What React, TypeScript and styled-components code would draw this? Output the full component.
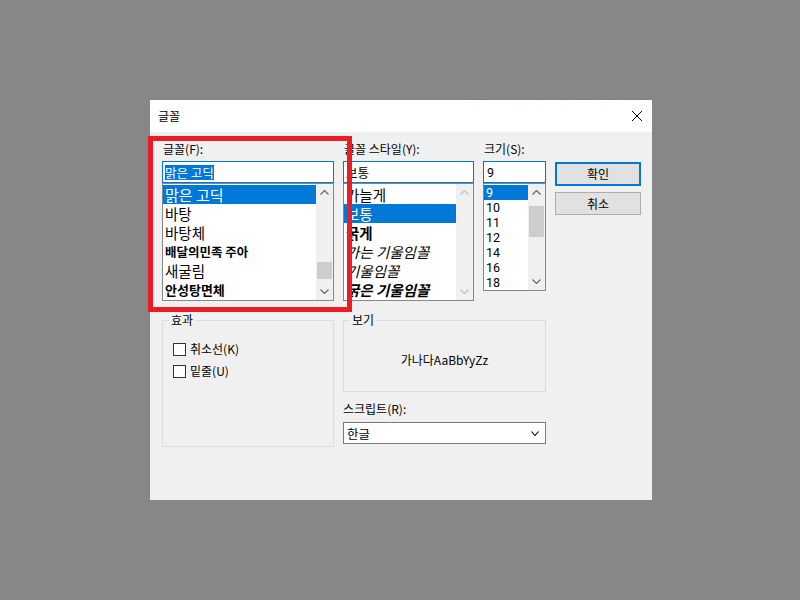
import React from 'react';
import styled, { createGlobalStyle, css } from 'styled-components';

const GlobalStyle = createGlobalStyle`
  html, body { margin: 0; padding: 0; background: #878787; }
  body {
    font-family: "Noto Sans CJK KR", "Noto Sans", sans-serif;
    font-size: 12px;
    color: #000;
  }
  * { box-sizing: border-box; }
`;

const Page = styled.div`
  width: 800px;
  height: 600px;
  padding: 100px 0 0 150px;
  background: #878787;
`;

const Dialog = styled.div`
  position: relative;
  width: 502px;
  height: 400px;
  background: #f0f0f0;
  display: flex;
  flex-direction: column;
`;

const BehindStrip = styled.div`
  position: absolute;
  top: -1px;
  left: 317px;
  height: 1px;
  display: flex;
  gap: 5px;
`;

const StripSeg = styled.div<{ $c: string; $w: number }>`
  width: ${(p) => p.$w}px;
  height: 100%;
  background: ${(p) => p.$c};
`;

const TitleBar = styled.div`
  height: 32px;
  background: #fff;
  display: flex;
  align-items: center;
  justify-content: space-between;
  padding: 0 10px 0 8px;
`;

const Title = styled.span`
  font-size: 12px;
  line-height: 16px;
`;

const CloseButton = styled.button`
  width: 10px;
  height: 10px;
  padding: 0;
  border: 0;
  background: none;
  display: flex;
`;

const Body = styled.div`
  padding: 9px 0 0 12px;
  display: flex;
  flex-direction: column;
`;

const TopRow = styled.div`
  display: grid;
  grid-template-columns: 172px 131px 63px 86px;
  column-gap: 9px;
  align-items: start;
`;

const Column = styled.div`
  display: flex;
  flex-direction: column;
`;

const Label = styled.div`
  font-size: 12px;
  line-height: 16px;
  height: 16px;
  white-space: nowrap;
`;

const FieldLabel = styled(Label)`
  margin-bottom: 4px;
  padding-left: 1px;
`;

const TextInput = styled.div<{ $latin?: boolean }>`
  height: 22px;
  border: 1px solid #0078d7;
  background: #fff;
  padding: 0 2px;
  display: flex;
  align-items: center;
  font-size: ${(p) => (p.$latin ? 12.5 : 12.5)}px;
  line-height: 15px;
  white-space: nowrap;
  overflow: hidden;
  ${(p) =>
    p.$latin &&
    css`
      font-family: Roboto, "Noto Sans", sans-serif;
      padding-left: 3px;
    `}
`;

const Selection = styled.span`
  background: #0078d7;
  color: #fff;
`;

const ListBox = styled.div<{ $h: number }>`
  height: ${(p) => p.$h}px;
  border: 1px solid #828790;
  background: #fff;
  display: flex;
`;

const Items = styled.div<{ $latin?: boolean }>`
  flex: 1;
  min-width: 0;
  padding-top: 1px;
  overflow: hidden;
  ${(p) =>
    p.$latin &&
    css`
      font-family: Roboto, "Noto Sans", sans-serif;
    `}
`;

const Row = styled.div<{
  $h: number;
  $size: number;
  $selected?: boolean;
  $bold?: boolean;
  $italic?: boolean;
}>`
  height: ${(p) => p.$h}px;
  line-height: ${(p) => p.$h}px;
  font-size: ${(p) => p.$size}px;
  padding-left: 2px;
  white-space: nowrap;
  overflow: hidden;
  font-weight: ${(p) => (p.$bold ? 700 : 400)};
  font-style: ${(p) => (p.$italic ? 'italic' : 'normal')};
  ${(p) =>
    p.$selected &&
    css`
      background: #0078d7;
      color: #fff;
    `}
`;

const ScrollBar = styled.div`
  width: 17px;
  background: #f0f0f0;
  display: flex;
  flex-direction: column;
`;

const ScrollButton = styled.div<{ $disabled?: boolean }>`
  height: 17px;
  display: flex;
  align-items: center;
  justify-content: center;
  color: ${(p) => (p.$disabled ? '#c0c0c0' : '#606060')};
`;

const Track = styled.div`
  flex: 1;
`;

const Thumb = styled.div<{ $top: number; $h: number }>`
  margin: ${(p) => p.$top}px 1px 0;
  height: ${(p) => p.$h}px;
  background: #cdcdcd;
`;

const ButtonColumn = styled.div`
  display: flex;
  flex-direction: column;
  gap: 6px;
  padding-top: 21px;
`;

const Button = styled.button<{ $primary?: boolean }>`
  height: ${(p) => (p.$primary ? 24 : 23)}px;
  padding: 0;
  background: #e1e1e1;
  border: 1px solid #adadad;
  font-family: inherit;
  font-size: 12px;
  line-height: 16px;
  color: #000;
  ${(p) =>
    p.$primary &&
    css`
      border: 2px solid #0078d7;
    `}
`;

const BottomRow = styled.div`
  display: grid;
  grid-template-columns: 172px 203px;
  column-gap: 9px;
  margin-top: 12px;
  align-items: start;
`;

const Group = styled.fieldset<{ $h: number }>`
  margin: 0;
  padding: 0;
  min-width: 0;
  border: 1px solid #dcdcdc;
  height: ${(p) => p.$h}px;
`;

const Legend = styled.legend`
  padding: 0 2px;
  margin-left: 6px;
  font-size: 12px;
  line-height: 14px;
`;

const CheckList = styled.div`
  padding: 14px 0 0 10px;
  display: flex;
  flex-direction: column;
  gap: 6px;
`;

const CheckRow = styled.label`
  display: flex;
  align-items: center;
  gap: 4px;
  height: 16px;
  font-size: 12px;
  line-height: 16px;
`;

const CheckBox = styled.span`
  width: 13px;
  height: 13px;
  border: 1px solid #333;
  background: #fff;
`;

const Preview = styled.div`
  height: 64px;
  display: flex;
  align-items: center;
  justify-content: center;
  font-size: 12px;
`;

const ScriptLabel = styled(Label)`
  margin: 9px 0 5px;
`;

const Select = styled.div`
  height: 22px;
  border: 1px solid #7a7a7a;
  background: #fff;
  display: flex;
  align-items: center;
  justify-content: space-between;
  padding: 0 6px 0 3px;
  font-size: 12.5px;
`;

const Highlight = styled.div`
  position: absolute;
  left: -2px;
  top: 36px;
  width: 204px;
  height: 176px;
  border: 5px solid #ed1c24;
  pointer-events: none;
`;

const Chevron = ({ dir, w = 8 }: { dir: 'up' | 'down'; w?: number }) => (
  <svg width={w + 1} height={5} viewBox={`0 0 ${w + 1} 5`}>
    <path
      d={
        dir === 'up'
          ? `M0.5 4.5 L${(w + 1) / 2} 0.5 L${w + 0.5} 4.5`
          : `M0.5 0.5 L${(w + 1) / 2} 4.5 L${w + 0.5} 0.5`
      }
      fill="none"
      stroke="currentColor"
      strokeWidth="1.1"
    />
  </svg>
);

type Item = {
  label: string;
  size?: number;
  selected?: boolean;
  bold?: boolean;
  italic?: boolean;
};

const fonts: Item[] = [
  { label: '맑은 고딕', size: 15, selected: true },
  { label: '바탕', size: 14.5 },
  { label: '바탕체', size: 14.5 },
  { label: '배달의민족 주아', size: 12.5, bold: true },
  { label: '새굴림', size: 14.5 },
  { label: '안성탕면체', size: 13, bold: true },
];

const styles: Item[] = [
  { label: '가늘게' },
  { label: '보통', selected: true },
  { label: '굵게', bold: true },
  { label: '가는 기울임꼴', italic: true },
  { label: '기울임꼴', italic: true },
  { label: '굵은 기울임꼴', bold: true, italic: true },
];

const sizes: Item[] = ['9', '10', '11', '12', '14', '16', '18'].map((s, i) => ({
  label: s,
  selected: i === 0,
}));

const strip = [
  { c: '#8e7777', w: 17 },
  { c: '#8f8272', w: 17 },
  { c: '#8b8a72', w: 17 },
  { c: '#768b79', w: 17 },
  { c: '#6f898d', w: 17 },
  { c: '#797b92', w: 17 },
  { c: '#8b7990', w: 17 },
  { c: '#8a8080', w: 27 },
];

const Scroll = ({ disabled, thumb }: { disabled?: boolean; thumb?: { top: number; h: number } }) => (
  <ScrollBar>
    <ScrollButton $disabled={disabled}>
      <Chevron dir="up" />
    </ScrollButton>
    <Track>{thumb && <Thumb $top={thumb.top} $h={thumb.h} />}</Track>
    <ScrollButton $disabled={disabled}>
      <Chevron dir="down" />
    </ScrollButton>
  </ScrollBar>
);

const List = ({
  items,
  h,
  rowH,
  size,
  latin,
  disabled,
  thumb,
}: {
  items: Item[];
  h: number;
  rowH: number;
  size: number;
  latin?: boolean;
  disabled?: boolean;
  thumb?: { top: number; h: number };
}) => (
  <ListBox $h={h}>
    <Items $latin={latin}>
      {items.map((it) => (
        <Row
          key={it.label}
          $h={rowH}
          $size={it.size ?? size}
          $selected={it.selected}
          $bold={it.bold}
          $italic={it.italic}
        >
          {it.label}
        </Row>
      ))}
    </Items>
    <Scroll disabled={disabled} thumb={thumb} />
  </ListBox>
);

export default function App() {
  return (
    <>
      <GlobalStyle />
      <Page>
        <Dialog>
          <BehindStrip>
            {strip.map((s, i) => (
              <StripSeg key={i} $c={s.c} $w={s.w} />
            ))}
          </BehindStrip>
          <TitleBar>
            <Title>글꼴</Title>
            <CloseButton aria-label="닫기">
              <svg width="10" height="10" viewBox="0 0 10 10">
                <path d="M0 0 L10 10 M10 0 L0 10" stroke="#000" strokeWidth="1" />
              </svg>
            </CloseButton>
          </TitleBar>
          <Body>
            <TopRow>
              <Column>
                <FieldLabel>글꼴(F):</FieldLabel>
                <TextInput>
                  <Selection>맑은 고딕</Selection>
                </TextInput>
                <List items={fonts} h={118} rowH={19} size={14} thumb={{ top: 61, h: 17 }} />
              </Column>
              <Column>
                <FieldLabel>글꼴 스타일(Y):</FieldLabel>
                <TextInput>보통</TextInput>
                <List items={styles} h={118} rowH={19} size={14.5} disabled />
              </Column>
              <Column>
                <FieldLabel>크기(S):</FieldLabel>
                <TextInput $latin>9</TextInput>
                <List
                  items={sizes}
                  h={108}
                  rowH={15}
                  size={12.5}
                  latin
                  thumb={{ top: 5, h: 31 }}
                />
              </Column>
              <ButtonColumn>
                <Button $primary>확인</Button>
                <Button>취소</Button>
              </ButtonColumn>
            </TopRow>
            <BottomRow>
              <Group $h={134}>
                <Legend>효과</Legend>
                <CheckList>
                  <CheckRow>
                    <CheckBox />
                    취소선(K)
                  </CheckRow>
                  <CheckRow>
                    <CheckBox />
                    밑줄(U)
                  </CheckRow>
                </CheckList>
              </Group>
              <Column>
                <Group $h={79}>
                  <Legend>보기</Legend>
                  <Preview>가나다AaBbYyZz</Preview>
                </Group>
                <ScriptLabel>스크립트(R):</ScriptLabel>
                <Select>
                  <span>한글</span>
                  <Chevron dir="down" w={7} />
                </Select>
              </Column>
            </BottomRow>
          </Body>
          <Highlight />
        </Dialog>
      </Page>
    </>
  );
}
